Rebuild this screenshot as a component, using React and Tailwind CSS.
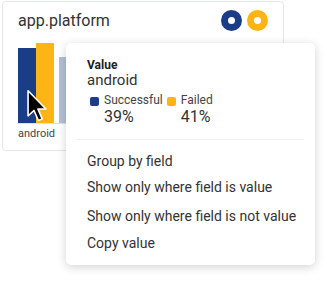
import React from 'react';

const BLUE = 'bg-[#1b3d86]';
const YELLOW = 'bg-[#fdb515]';

const Donut = ({ color }) => (
  <div className={`w-[21px] h-[21px] rounded-full ${color} flex items-center justify-center`}>
    <div className="w-[7px] h-[7px] rounded-full bg-white" />
  </div>
);

const LegendItem = ({ color, label, value }) => (
  <div className="flex items-start gap-[5px]">
    <div className={`mt-[4px] w-[9px] h-[9px] rounded-[2px] ${color}`} />
    <div className="flex flex-col">
      <span className="text-[12px] leading-[14px] text-[#444]">{label}</span>
      <span className="text-[16px] leading-[20px] text-[#333]">{value}</span>
    </div>
  </div>
);

const Cursor = () => (
  <svg width="22" height="34" viewBox="0 0 12 19" className="absolute left-[26px] top-[89px]">
    <path d="M1 1 L1 15 L4.3 12 L6.8 17.6 L8.9 16.7 L6.5 11.2 L11 11.2 Z" fill="#000" stroke="#fff" strokeWidth="0.9" strokeLinejoin="round" />
  </svg>
);

const App = () => {
  const menu = [
    { label: 'Group by field', mt: 'mt-[11px]' },
    { label: 'Show only where field is value', mt: 'mt-[6px]' },
    { label: 'Show only where field is not value', mt: 'mt-[9px]' },
    { label: 'Copy value', mt: 'mt-[7px]' },
  ];

  return (
    <div className="relative w-[327px] h-[281px] bg-white overflow-hidden font-['Roboto',sans-serif] text-[#333]">
      <div className="ml-[2px] mt-[1px] w-[282px] h-[150px] border border-[#e3e6eb] rounded-[4px] flex flex-col">
        <div className="flex items-center justify-between pl-[15px] pr-[15px] pt-[8px]">
          <span className="text-[16px] leading-[20px] text-[#333]">app.platform</span>
          <div className="flex gap-[5px]">
            <Donut color={BLUE} />
            <Donut color={YELLOW} />
          </div>
        </div>
        <div className="ml-[14px] mt-[13px] w-[90px] h-[80px] flex items-end border-b border-[#dde1e8]">
          <div className="ml-[1px] w-[18px] h-[75px] bg-[#1b3d86]" />
          <div className="w-[18px] h-[80px] bg-[#fdb515]" />
          <div className="ml-[5px] w-[18px] h-[66px] bg-[#b4bfd6]" />
        </div>
        <span className="ml-[15px] mt-[3px] text-[11px] leading-[14px] text-[#444]">android</span>
      </div>

      <Cursor />

      <div className="absolute left-[66px] top-[43px] w-[249px] h-[222px] bg-white rounded-[5px] shadow-[0_2px_10px_rgba(0,0,0,0.18)] pt-[15px] px-[21px]">
        <div className="text-[12px] leading-[14px] font-bold text-[#222]">Value</div>
        <div className="text-[15px] leading-[17px] text-[#333]">android</div>
        <div className="mt-[4px] ml-[3px] flex gap-[4px]">
          <LegendItem color={BLUE} label="Successful" value="39%" />
          <LegendItem color={YELLOW} label="Failed" value="41%" />
        </div>
        <div className="mt-[12px] -mx-[10px] border-t border-[#eceef1]" />
        {menu.map((m) => (
          <div key={m.label} className={`${m.mt} whitespace-nowrap text-[14px] leading-[20px] text-[#333]`}>
            {m.label}
          </div>
        ))}
      </div>
    </div>
  );
};

export default App;
